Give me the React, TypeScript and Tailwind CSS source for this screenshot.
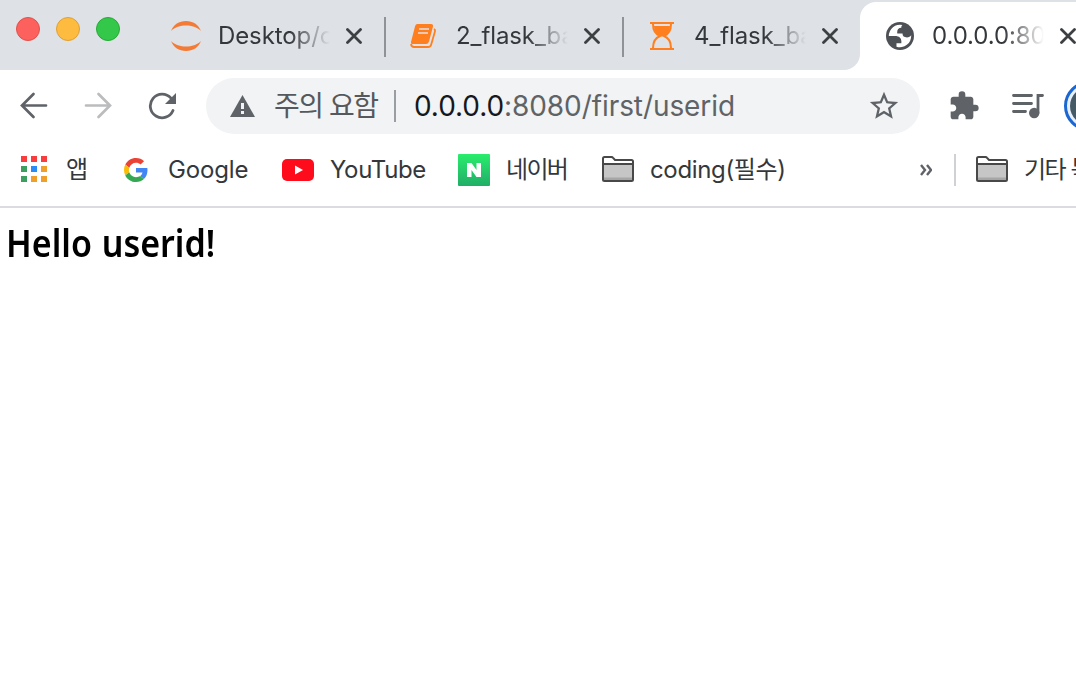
import React from 'react';
import { MdExtension, MdStarBorder } from 'react-icons/md';

const JupyterIcon = () => (
  <svg width="32" height="32" viewBox="0 0 32 32" fill="#f37b35">
    <path d="M1 11C3.500 4.500 9 1 16 1s12.500 3.500 15 10C27 7 21.500 5.500 16 5.500S5 7 1 11z" />
    <path d="M1 21C3.500 27.500 9 31 16 31s12.500-3.500 15-10C27 25 21.500 26.500 16 26.500S5 25 1 21z" />
  </svg>
);

const BookIcon = () => (
  <svg className="mr-[3px] shrink-0" width="26" height="24" viewBox="0 0 26 24" fill="none">
    <path d="M7 0h14q2.500 0 2 2.500l-4 15Q18.300 20 16 20H3Q.5 20.500 1 18L5 2.500Q5.500 0 7 0z" fill="#ff7f1f" />
    <path d="M9 5h10M8 9h10" stroke="#dee1e6" strokeWidth="1.600" />
    <path d="M24 5q1.500 1 .8 3l-3.600 12.500q-.7 2.500-3 2.500H4q-2.500 0-3-3" stroke="#ff7f1f" strokeWidth="1.800" />
  </svg>
);

const HourglassIcon = () => (
  <svg width="24" height="28" viewBox="0 0 24 28" fill="none">
    <path d="M0 1h24M0 27h24" stroke="#ff7f1f" strokeWidth="2" />
    <path d="M3 2c0 6 2 10 7 12-5 2-7 6-7 12M21 2c0 6-2 10-7 12 5 2 7 6 7 12" stroke="#ff7f1f" strokeWidth="2" />
    <path d="M4 4h16c0 5-3 9-6 10h-4C7 13 4 9 4 4z" fill="#ff7f1f" />
  </svg>
);

const GlobeIcon = () => (
  <svg width="28" height="28" viewBox="2 2 20 20">
    <circle cx="12" cy="12" r="10" fill="#4d5156" />
    <path
      fill="#fff"
      d="M4 12h4.400c3.407.022 4.922 1.730 4.543 5.127H9.488v2.470a8.004 8.004 0 0 0 10.498-8.083C19.327 12.504 18.332 13 17 13c-2.137 0-3.206-.916-3.206-2.750h-3.748c-.274-2.728.683-4.092 2.870-4.092 0-.975.327-1.597.811-1.970A8.004 8.004 0 0 0 4 12z"
    />
  </svg>
);

const CloseIcon = () => (
  <svg width="16" height="16" viewBox="0 0 16 16" stroke="#3c4043" strokeWidth="2.800" strokeLinecap="round">
    <path d="M1.500 1.500l13 13M14.500 1.500l-13 13" />
  </svg>
);

const FolderIcon = () => (
  <svg className="shrink-0" width="32" height="26" viewBox="0 0 32 26" fill="none">
    <path d="M2 8h28v16H2z" fill="#c6c6c6" />
    <path d="M2 21.500h28V24H2z" fill="#a6a6a6" />
    <path d="M1 2.500Q1 1 2.500 1h7q1 0 1.600.8L13 4h16.500Q31 4 31 5.500v18q0 1.500-1.500 1.500h-27Q1 25 1 23.500zM1 8h30" stroke="#484848" strokeWidth="2" />
  </svg>
);

const GoogleIcon = () => (
  <svg className="shrink-0" width="24" height="24" viewBox="0 0 48 48">
    <path fill="#EA4335" d="M24 9.500c3.540 0 6.710 1.220 9.210 3.600l6.850-6.850C35.900 2.380 30.470 0 24 0 14.620 0 6.510 5.380 2.560 13.220l7.980 6.190C12.430 13.720 17.740 9.500 24 9.500z" />
    <path fill="#4285F4" d="M46.980 24.550c0-1.570-.15-3.090-.38-4.550H24v9.020h12.940c-.58 2.960-2.260 5.480-4.780 7.180l7.730 6c4.510-4.180 7.090-10.360 7.090-17.650z" />
    <path fill="#FBBC05" d="M10.530 28.590c-.48-1.450-.76-2.990-.76-4.590s.27-3.140.76-4.590l-7.980-6.190C.92 16.460 0 20.120 0 24c0 3.880.92 7.540 2.560 10.780l7.970-6.190z" />
    <path fill="#34A853" d="M24 48c6.480 0 11.930-2.130 15.890-5.810l-7.730-6c-2.150 1.450-4.920 2.300-8.160 2.300-6.260 0-11.570-4.220-13.470-9.910l-7.980 6.190C6.510 42.620 14.620 48 24 48z" />
  </svg>
);

const appColors = [
  'bg-[#f93d3d]', 'bg-[#f93d3d]', 'bg-[#f93d3d]',
  'bg-[#3c9f60]', 'bg-[#2b8cf6]', 'bg-[#f0a02a]',
  'bg-[#3c9f60]', 'bg-[#f0a02a]', 'bg-[#f0a02a]',
];

interface TabProps {
  icon: React.ReactNode;
  title: string;
}

const Tab: React.FC<TabProps> = ({ icon, title }) => (
  <div className="flex h-full w-[238px] shrink-0 items-center">
    <div className="ml-[22px] flex w-8 shrink-0 justify-center">{icon}</div>
    <div className="mb-px ml-4 h-[30px] w-[112px] shrink-0 overflow-hidden whitespace-nowrap text-2xl leading-[30px] tracking-[-0.1px] text-[#34383b] [mask-image:linear-gradient(to_right,black_64%,transparent_100%)]">
      {title}
    </div>
    <div className="ml-4 shrink-0"><CloseIcon /></div>
  </div>
);

export default function App() {
  return (
    <div className="h-[700px] w-[1076px] overflow-hidden bg-white font-['Inter','Noto_Sans_CJK_KR',sans-serif]">
      {/* tab strip */}
      <div className="flex h-[70px] bg-white">
        <div className="flex h-[70px] w-[860px] shrink-0 items-center rounded-br-[16px] bg-[#dee1e6]">
          <div className="mb-3 flex w-[148px] shrink-0 gap-4 pl-4">
            <div className="size-6 rounded-full border border-[#e2504b] bg-[#fc615d]" />
            <div className="size-6 rounded-full border border-[#dfa035] bg-[#fdbc40]" />
            <div className="size-6 rounded-full border border-[#27aa35] bg-[#34c84a]" />
          </div>
          <div className="flex h-full items-center pt-[2px]">
            <Tab icon={<JupyterIcon />} title="Desktop/c" />
            <div className="mt-0.5 -ml-0.5 h-10 w-0.5 bg-[#8f9297]" />
            <Tab icon={<BookIcon />} title="2_flask_ba" />
            <div className="mt-0.5 -ml-0.5 h-10 w-0.5 bg-[#8f9297]" />
            <Tab icon={<HourglassIcon />} title="4_flask_ba" />
          </div>
        </div>
        <div className="h-[70px] flex-1 bg-[#dee1e6] pt-0.5">
          <div className="flex h-[68px] items-center overflow-hidden rounded-tl-[16px] bg-white pl-0.5">
            <Tab icon={<GlobeIcon />} title="0.0.0.0:80" />
          </div>
        </div>
      </div>

      {/* toolbar */}
      <div className="flex h-[72px] items-center">
        <svg className="ml-5 shrink-0" width="28" height="28" viewBox="0 0 28 28" fill="none" stroke="#5f6368" strokeWidth="2.700" strokeLinecap="round">
          <path d="M26 13.500H3M13.500 2L2 13.500 13.500 25" />
        </svg>
        <svg className="ml-9 shrink-0" width="28" height="28" viewBox="0 0 28 28" fill="none" stroke="#babcbe" strokeWidth="2.700" strokeLinecap="round">
          <path d="M2 13.500h23M14.500 2L26 13.500 14.500 25" />
        </svg>
        <svg className="ml-9 shrink-0" width="28" height="28" viewBox="0 0 28 28" fill="none">
          <path d="M25 18.500A11.800 11.800 0 1 1 23 6.200" stroke="#5f6368" strokeWidth="2.800" strokeLinecap="round" />
          <path d="M28 1v11H17z" fill="#5f6368" />
        </svg>
        <div className="ml-[30px] flex h-14 w-[714px] shrink-0 items-center rounded-full bg-[#f1f3f4]">
          <svg className="ml-6 shrink-0" width="25" height="22" viewBox="0 0 25 22">
            <path d="M12.500 0L25 22H0z" fill="#5f6368" />
            <path d="M11 8h3v6h-3zM11 16h3v3h-3z" fill="#f1f3f4" />
          </svg>
          <span className="ml-[19px] w-[120px] shrink-0 whitespace-nowrap text-[28px] leading-8 tracking-[-1.500px] text-[#55595e]">주의 요함</span>
          <div className="h-8 w-0.5 shrink-0 bg-[#9a9da1]" />
          <span className="ml-[18px] whitespace-nowrap text-[28px] leading-8 tracking-[-0.08px] text-[#17181b]">
            0.0.0.0<span className="text-[#606366]">:8080/first/userid</span>
          </span>
          <MdStarBorder className="mr-[19px] ml-auto size-[34px] shrink-0 text-[#5f6368]" />
        </div>
        <MdExtension className="ml-7 size-8 shrink-0 text-[#5f6368]" />
        <svg className="ml-8 shrink-0" width="32" height="28" viewBox="0 0 32 28" fill="none" stroke="#5f6368" strokeWidth="2.800" strokeLinecap="round">
          <path d="M1.500 3.500h18M1.500 11.500h18M1.500 19.500h12M26 21V3.500h4.500" />
          <circle cx="22.200" cy="21" r="3.800" fill="#5f6368" />
        </svg>
        <div className="ml-5 flex size-[50px] shrink-0 items-center justify-center rounded-full border-[3px] border-[#1b66d1] bg-[#e8f0fe]">
          <div className="size-[38px] rounded-full bg-[#455a64]" />
        </div>
      </div>

      {/* bookmarks bar */}
      <div className="flex h-[66px] items-center border-b-2 border-[#dadce0] pb-2 text-2xl leading-8 tracking-[-0.15px] whitespace-nowrap text-[#34383b]">
        <div className="mb-0.5 ml-[21px] grid shrink-0 grid-cols-3 gap-1">
          {appColors.map((color, i) => (
            <div key={i} className={`size-1.5 ${color}`} />
          ))}
        </div>
        <span className="ml-[19px] w-[58px] shrink-0">앱</span>
        <GoogleIcon />
        <span className="ml-5 w-[114px] shrink-0">Google</span>
        <svg className="shrink-0" width="32" height="22" viewBox="0 0 32 22">
          <rect width="32" height="22" rx="5" fill="#ff0c1c" />
          <path d="M13 6.500l8 4.500-8 4.500z" fill="#fff" />
        </svg>
        <span className="ml-4 w-32 shrink-0 tracking-[-0.35px]">YouTube</span>
        <div className="flex size-8 shrink-0 items-center justify-center rounded-[1px] bg-linear-to-b from-[#29ed6c] to-[#21ae67]">
          <svg width="14" height="14" viewBox="0 0 14 14" fill="#fff">
            <path d="M0 0h4.500l5 7V0H14v14H9.500l-5-7v7H0z" />
          </svg>
        </div>
        <span className="ml-4 w-24 shrink-0 tracking-[-1.700px]">네이버</span>
        <div className="mb-0.5 shrink-0"><FolderIcon /></div>
        <span className="ml-4 w-[270px] shrink-0 tracking-[-0.35px]">coding(필수)</span>
        <svg className="shrink-0" width="12" height="12" viewBox="0 0 12 12" fill="none" stroke="#5f6368" strokeWidth="2.400">
          <path d="M1 1l4 5-4 5M7 1l4 5-4 5" />
        </svg>
        <div className="ml-[22px] h-8 w-0.5 shrink-0 bg-[#cfd1d4]" />
        <div className="mb-0.5 ml-5 shrink-0"><FolderIcon /></div>
        <span className="ml-4 tracking-[-1.500px]">기타 북마크</span>
      </div>

      <h1 className="mt-[11px] ml-1.5 w-fit origin-left scale-x-[0.92] font-['Noto_Sans','Noto_Sans_CJK_KR',sans-serif] text-[37px] leading-[48px] font-semibold text-black [word-spacing:1px]">
        Hello userid!
      </h1>
    </div>
  );
}
